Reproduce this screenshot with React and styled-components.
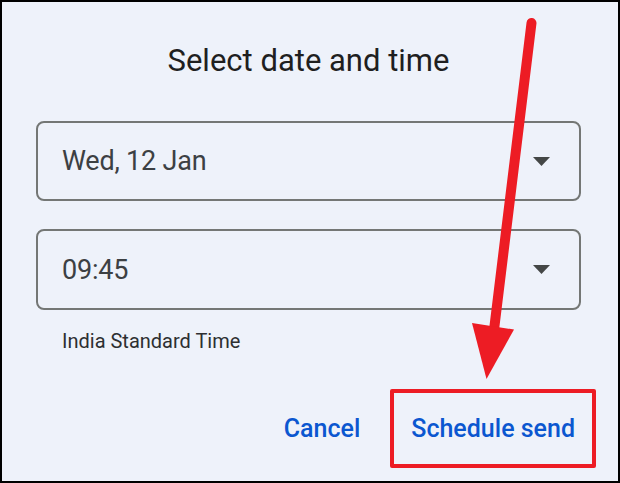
import React from "react";
import styled, { createGlobalStyle } from "styled-components";

const Global = createGlobalStyle`
  html, body { margin: 0; padding: 0; background: #eef2fa; }
  * { box-sizing: border-box; }
`;

const Frame = styled.div`
  position: relative;
  width: 620px;
  height: 483px;
  border: 2px solid #000;
  background: #eef2fa;
  overflow: hidden;
  font-family: Roboto, "Noto Sans", Arial, sans-serif;
`;

const Dialog = styled.div`
  display: flex;
  flex-direction: column;
  padding: 39px 37px 0 34px;
`;

const Title = styled.h1`
  margin: 0 0 40px;
  font-size: 31px;
  line-height: 40px;
  font-weight: 400;
  color: #1f1f1f;
  text-align: center;
`;

const Field = styled.div`
  display: flex;
  align-items: center;
  justify-content: space-between;
  height: ${(p) => p.$h}px;
  margin-bottom: ${(p) => p.$mb || 0}px;
  padding: 0 29px 0 24px;
  border: 2px solid #747775;
  border-radius: 8px;
`;

const FieldText = styled.span`
  font-size: 27px;
  line-height: 32px;
  color: #3c4043;
  letter-spacing: -0.2px;
`;

const Caret = styled.svg`
  width: 17px;
  height: 9px;
  display: block;
`;

const Zone = styled.div`
  margin-top: 19px;
  padding-left: 26px;
  font-size: 20px;
  line-height: 24px;
  color: #2d2f31;
`;

const Actions = styled.div`
  display: flex;
  justify-content: flex-end;
  align-items: center;
  gap: 16px;
  margin-top: 36px;
  margin-right: -15px;
`;

const TextButton = styled.button`
  display: flex;
  align-items: center;
  justify-content: center;
  height: 79px;
  padding: 0 ${(p) => (p.$marked ? 17 : 14)}px;
  border: ${(p) => (p.$marked ? "4px solid #ed1c24" : "none")};
  border-radius: 2px;
  background: transparent;
  font-family: inherit;
  font-size: 25px;
  font-weight: 500;
  color: #0b57d0;
  cursor: pointer;
`;

const ArrowLayer = styled.svg`
  position: absolute;
  left: -2px;
  top: -2px;
  width: 620px;
  height: 483px;
  pointer-events: none;
`;

function Select({ value, h, mb }) {
  return (
    <Field $h={h} $mb={mb}>
      <FieldText>{value}</FieldText>
      <Caret viewBox="0 0 17 9">
        <polygon points="0,0 17,0 8.5,9" fill="#444746" />
      </Caret>
    </Field>
  );
}

export default function App() {
  return (
    <>
      <Global />
      <Frame>
        <Dialog>
          <Title>Select date and time</Title>
          <Select value="Wed, 12 Jan" h={80} mb={28} />
          <Select value="09:45" h={81} />
          <Zone>India Standard Time</Zone>
          <Actions>
            <TextButton>Cancel</TextButton>
            <TextButton $marked>Schedule send</TextButton>
          </Actions>
        </Dialog>
        <ArrowLayer viewBox="0 0 620 483">
          <line x1="531.5" y1="23" x2="494" y2="330" stroke="#ed1c24" strokeWidth="10" strokeLinecap="round" />
          <polygon points="472,323 514,329.5 486.5,379" fill="#ed1c24" />
        </ArrowLayer>
      </Frame>
    </>
  );
}
